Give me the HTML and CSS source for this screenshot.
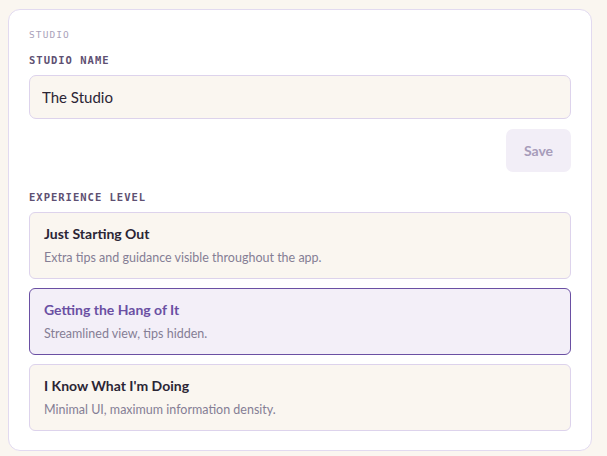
FILE: index.html
```html
<!DOCTYPE html>
<html lang="en">
<head>
  <meta charset="UTF-8" />
  <meta name="viewport" content="width=device-width, initial-scale=1.0" />
  <title>Studio Settings</title>
  <link rel="stylesheet" href="styles.css">
</head>

<body>
  <section class="panel">
    <div class="section-title">Studio</div>

    <label class="field-label" for="studio-name">Studio Name</label>
    <input id="studio-name" class="text-input" type="text" value="The Studio" />

    <div class="actions">
      <button class="save-btn" type="button">Save</button>
    </div>

    <div class="field-label">Experience Level</div>
    <div class="levels">
      <div class="level">
        <div class="level-title">Just Starting Out</div>
        <div class="level-desc">Extra tips and guidance visible throughout the app.</div>
      </div>
      <div class="level selected">
        <div class="level-title">Getting the Hang of It</div>
        <div class="level-desc">Streamlined view, tips hidden.</div>
      </div>
      <div class="level">
        <div class="level-title">I Know What I'm Doing</div>
        <div class="level-desc">Minimal UI, maximum information density.</div>
      </div>
    </div>
  </section>
</body>
</html>
```

FILE: styles.css
```css
body {
  margin: 0;
  padding: 9px 15px 0 8px;
  background: #faf6f0;
  font-family: 'Lato', 'Noto Sans', sans-serif;
  color: #2b2535;
}

.panel {
  background: #ffffff;
  border: 1px solid #e2daf0;
  border-radius: 12px;
  padding: 17px 20px 19px 20px;
}

.section-title {
  font-family: 'DejaVu Sans Mono', monospace;
  font-size: 9.5px;
  letter-spacing: 1.1px;
  text-transform: uppercase;
  color: #aaa2ba;
  line-height: 16px;
  margin-bottom: 9px;
}

.field-label {
  display: block;
  font-family: 'DejaVu Sans Mono', monospace;
  font-size: 10.5px;
  font-weight: bold;
  letter-spacing: 1px;
  text-transform: uppercase;
  color: #5e5072;
  line-height: 16px;
  margin-bottom: 7px;
}

.text-input {
  box-sizing: border-box;
  width: 100%;
  height: 44px;
  padding: 0 12px;
  background: #faf6f0;
  border: 1px solid #ddd3ec;
  border-radius: 7px;
  font-family: 'Lato', 'Noto Sans', sans-serif;
  font-size: 15px;
  color: #2b2535;
  outline: none;
}

.actions {
  display: flex;
  justify-content: flex-end;
  margin-top: 10px;
  margin-bottom: 17px;
}

.save-btn {
  width: 65px;
  height: 43px;
  background: #f2eef7;
  border: none;
  border-radius: 7px;
  font-family: 'Lato', 'Noto Sans', sans-serif;
  font-size: 14px;
  font-weight: bold;
  color: #a79cba;
}

.levels {
  display: flex;
  flex-direction: column;
  gap: 9px;
  margin-top: 3px;
}

.level {
  box-sizing: border-box;
  height: 67px;
  padding: 12px 14px 0 14px;
  background: #faf6f0;
  border: 1px solid #ddd3ec;
  border-radius: 6px;
}

.level-title {
  font-size: 14px;
  font-weight: bold;
  line-height: 18px;
  color: #2b2535;
}

.level-desc {
  margin-top: 7px;
  font-size: 12.5px;
  line-height: 16px;
  color: #857e95;
}

.level.selected {
  background: #f3eff8;
  border-color: #6a4fa3;
}

.level.selected .level-title {
  color: #6a4fa3;
}
```
